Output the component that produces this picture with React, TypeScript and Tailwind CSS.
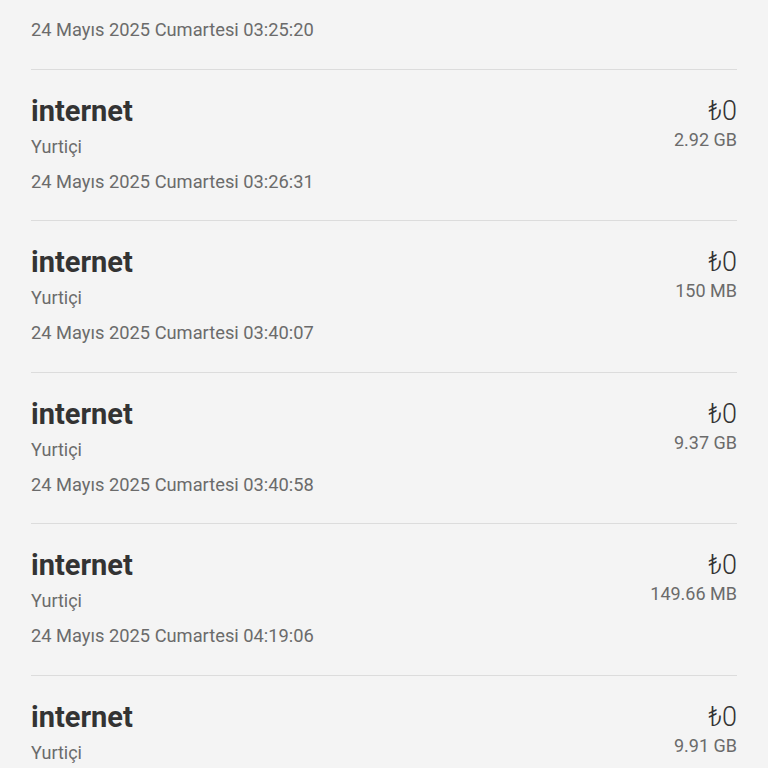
import React from 'react';

type Usage = {
  title: string;
  zone: string;
  date: string;
  price: string;
  amount: string;
};

const items: Usage[] = [
  { title: 'internet', zone: 'Yurtiçi', date: '24 Mayıs 2025 Cumartesi 03:26:31', price: '₺0', amount: '2.92 GB' },
  { title: 'internet', zone: 'Yurtiçi', date: '24 Mayıs 2025 Cumartesi 03:40:07', price: '₺0', amount: '150 MB' },
  { title: 'internet', zone: 'Yurtiçi', date: '24 Mayıs 2025 Cumartesi 03:40:58', price: '₺0', amount: '9.37 GB' },
  { title: 'internet', zone: 'Yurtiçi', date: '24 Mayıs 2025 Cumartesi 04:19:06', price: '₺0', amount: '149.66 MB' },
  { title: 'internet', zone: 'Yurtiçi', date: '24 Mayıs 2025 Cumartesi 04:32:44', price: '₺0', amount: '9.91 GB' },
];

function UsageRow({ item }: { item: Usage }) {
  return (
    <div className="flex justify-between border-t border-[#dcdcdc] pt-[23px] pb-[21.5px]">
      <div className="flex flex-col">
        <span className="text-[29px] leading-[36px] font-bold text-[#333333]">{item.title}</span>
        <span className="text-[18px] leading-[35px] text-[#6b6b6b]">{item.zone}</span>
        <span className="text-[18.3px] leading-[35px] text-[#6b6b6b]">{item.date}</span>
      </div>
      <div className="flex flex-col items-end">
        <span className="text-[27px] leading-[36px] font-light text-[#333333]">{item.price}</span>
        <span className="text-[18px] leading-[22px] text-[#6b6b6b]">{item.amount}</span>
      </div>
    </div>
  );
}

export default function App() {
  return (
    <div className="h-screen overflow-hidden bg-[#f4f4f4] px-[31px] font-['Roboto','Noto_Sans',sans-serif]">
      {/* previous entry, scrolled mostly out of view */}
      <div className="pt-[11.5px] pb-[22px]">
        <span className="text-[18.3px] leading-[35px] text-[#6b6b6b]">24 Mayıs 2025 Cumartesi 03:25:20</span>
      </div>
      {items.map((item, i) => (
        <UsageRow key={i} item={item} />
      ))}
    </div>
  );
}
